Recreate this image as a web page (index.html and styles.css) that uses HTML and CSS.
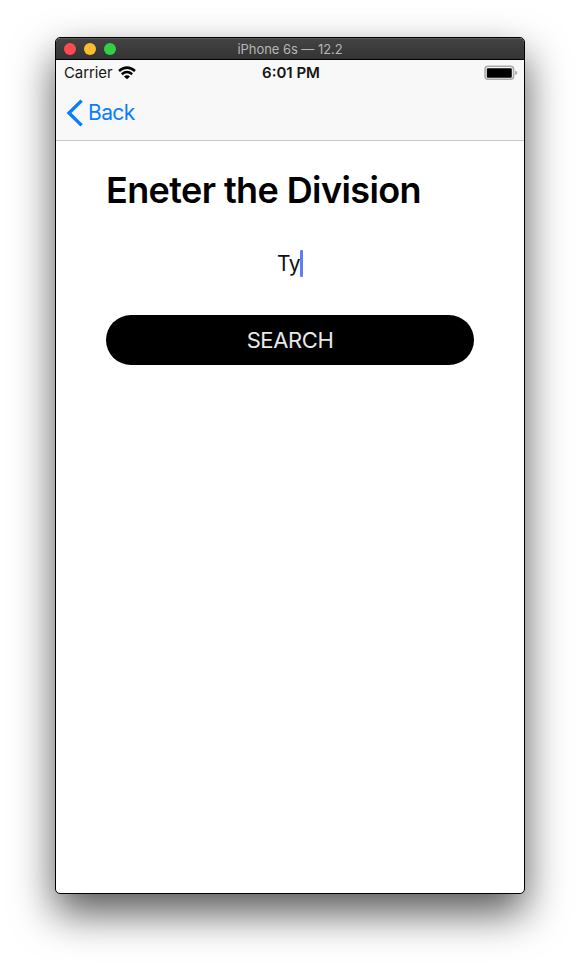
FILE: index.html
```html
<!DOCTYPE html>
<html lang="en">
<head>
<meta charset="utf-8">
<title>iPhone 6s</title>
<link rel="stylesheet" href="styles.css">
</head>
<body>
<main class="window">
  <header class="titlebar">
    <div class="lights"><i class="light close"></i><i class="light minimize"></i><i class="light expand"></i></div>
    <span class="title">iPhone 6s — 12.2</span>
  </header>
  <section class="chrome">
    <div class="status">
      <div class="carrier"><span>Carrier</span>
        <svg class="wifi" width="18" height="14" viewBox="0 0 18 14" fill="none" stroke="#000" stroke-width="2.5"><path d="M1 5Q9-1.8 17 5M3.8 8.2Q9 3.9 14.2 8.2"/><path d="M6 10.5Q9 8.2 12 10.5L9 13.3Z" fill="#000" stroke="none"/></svg>
      </div>
      <span class="time">6:01 PM</span>
      <svg class="battery" width="34" height="16" viewBox="0 0 34 16"><rect x="1" y="1.3" width="28.6" height="13" rx="3" fill="#f4f4f4" stroke="#aaa" stroke-width="1.6"/><rect x="2.8" y="3.2" width="25" height="9.5" rx="1" fill="#000"/><path d="M31.2 5.7Q33.3 6 33.3 7.8Q33.3 9.6 31.2 9.9Z" fill="#aaa"/></svg>
    </div>
    <nav class="nav">
      <svg width="18" height="28" viewBox="0 0 18 28" fill="none" stroke="#087dff" stroke-width="3.4"><path d="M15.6 1.6L3 14L15.6 26.4"/></svg>
      <span class="back">Back</span>
    </nav>
  </section>
  <section class="content">
    <h1>Eneter the Division</h1>
    <div class="field"><span>Ty</span><i class="caret"></i></div>
    <button class="search">SEARCH</button>
  </section>
</main>
</body>
</html>
```
FILE: styles.css
```css
* { box-sizing: border-box; }
body { margin: 0; height: 967px; padding: 37px 55px 0; background: #fff; overflow: hidden; font-family: Inter, "Liberation Sans", sans-serif; }
.window { width: 470px; height: 857px; border: 1px solid #000; border-radius: 5px; overflow: hidden; background: #fff; box-shadow: 0 19px 42px rgba(0,0,0,.66); }
.titlebar { height: 22px; display: grid; grid-template-columns: 1fr auto 1fr; grid-template-rows: 20px; align-items: center; background: linear-gradient(#434343, #343434); border-bottom: 1px solid #000; border-top: 1px solid #5c5c5c; }
.lights { display: flex; gap: 8px; padding-left: 8px; }
.light { width: 12px; height: 12px; border-radius: 50%; }
.close { background: #ff4b50; }
.minimize { background: #ffbd2e; }
.expand { background: #32d045; }
.title { color: #b6b6b6; font-size: 13px; line-height: 20px; letter-spacing: -.05px; }
.chrome { height: 81px; background: #f8f8f8; border-bottom: 1px solid #c8c8c8; }
.status { height: 26px; display: grid; grid-template-columns: 1fr auto 1fr; align-items: center; color: #151515; font-size: 15px; line-height: 26px; }
.carrier { display: flex; align-items: center; gap: 6px; padding-left: 8px; letter-spacing: -.1px; }
.time { font-weight: 600; padding-left: 2px; }
.battery { justify-self: end; margin-right: 6px; }
.nav { height: 53px; display: flex; align-items: center; gap: 4px; padding-left: 10px; color: #087dff; font-size: 21px; }
.back { letter-spacing: -.6px; line-height: 25px; }
.content { padding: 27px 50px 0; }
h1 { margin: 0; height: 44px; font-size: 36px; line-height: 44px; font-weight: 600; letter-spacing: -.6px; color: #000; white-space: nowrap; }
.field { height: 28px; margin-top: 37px; display: flex; justify-content: center; align-items: center; font-size: 21px; letter-spacing: -.5px; color: #111; }
.caret { width: 3px; height: 27px; background: #5c80f4; border-radius: 1px; }
.search { display: block; width: 368px; height: 50px; margin-top: 38px; padding: 0; border: 0; border-radius: 25px; background: #000; color: #e8e8e8; font: 22px/50px Inter, "Liberation Sans", sans-serif; letter-spacing: -.4px; }
```
